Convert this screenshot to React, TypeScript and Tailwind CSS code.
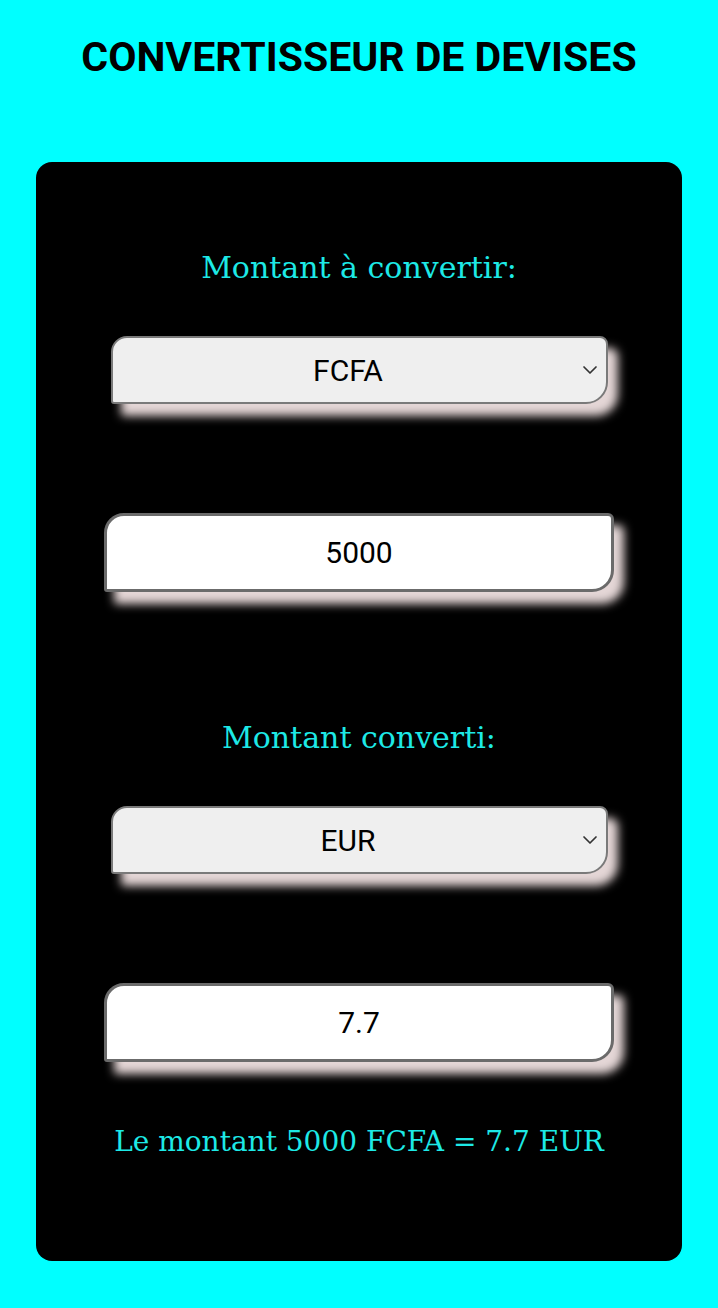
import React, { useState } from 'react';
import { ChevronDown } from 'lucide-react';

const selectCls =
  "appearance-none w-full h-full bg-[#efefef] border-2 border-[#7a7a7a] rounded-tl-[16px] rounded-tr-[8px] rounded-br-[22px] rounded-bl-[3px] shadow-[10px_12px_10px_#e4d6d6] pr-[22px] text-center [text-align-last:center] font-['Roboto',sans-serif] text-[30px] text-black outline-none";

const inputCls =
  "w-[510px] h-[79px] bg-white border-[3px] border-[#6b6b6b] rounded-tl-[20px] rounded-tr-[6px] rounded-br-[22px] rounded-bl-[3px] shadow-[10px_12px_10px_#e4d6d6] text-center font-['Roboto',sans-serif] text-[30px] text-black outline-none";

export default function App() {
  const [from, setFrom] = useState('FCFA');
  const [to, setTo] = useState('EUR');
  const [amount, setAmount] = useState('5000');
  const result = '7.7';

  return (
    <div className="min-h-screen bg-[#00ffff] flex flex-col items-center pt-[34px] pb-[47px]">
      {/* Titre */}
      <h1 className="font-['Roboto',sans-serif] font-bold text-[41px] leading-[46px] text-black">
        CONVERTISSEUR DE DEVISES
      </h1>

      <div className="mt-[82px] w-[646px] h-[1099px] bg-black rounded-[16px] flex flex-col items-center pt-[86px]">
        <label className="font-['DejaVu_Serif','Liberation_Serif',serif] text-[30px] leading-[40px] text-[#1de9e6]">
          Montant à convertir:
        </label>

        <div className="relative mt-[48px] w-[497px] h-[68px]">
          <select value={from} onChange={(e) => setFrom(e.target.value)} className={selectCls}>
            <option>FCFA</option>
            <option>EUR</option>
            <option>USD</option>
          </select>
          <ChevronDown className="absolute right-[6px] top-[22px] w-[24px] h-[24px] text-[#333] pointer-events-none" strokeWidth={1.7} />
        </div>

        <input value={amount} onChange={(e) => setAmount(e.target.value)} className={`mt-[109px] ${inputCls}`} />

        <label className="mt-[126px] font-['DejaVu_Serif','Liberation_Serif',serif] text-[30px] leading-[40px] text-[#1de9e6]">
          Montant converti:
        </label>

        <div className="relative mt-[48px] w-[497px] h-[68px]">
          <select value={to} onChange={(e) => setTo(e.target.value)} className={selectCls}>
            <option>EUR</option>
            <option>FCFA</option>
            <option>USD</option>
          </select>
          <ChevronDown className="absolute right-[6px] top-[22px] w-[24px] h-[24px] text-[#333] pointer-events-none" strokeWidth={1.7} />
        </div>

        <input value={result} readOnly className={`mt-[109px] ${inputCls}`} />

        <p className="mt-[60px] font-['DejaVu_Serif','Liberation_Serif',serif] text-[28px] leading-[40px] text-[#1de9e6]">
          Le montant {amount} {from} = {result} {to}
        </p>
      </div>
    </div>
  );
}
